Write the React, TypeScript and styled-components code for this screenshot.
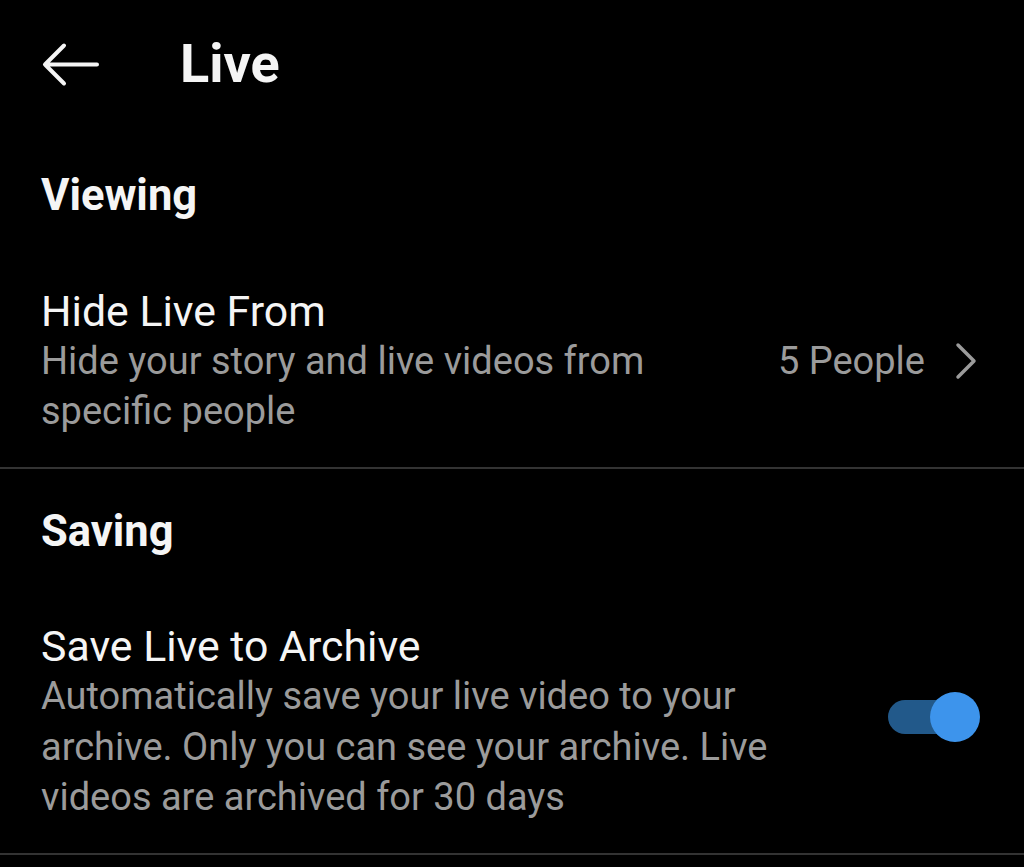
import styled, { createGlobalStyle } from "styled-components";

const GlobalStyle = createGlobalStyle`
    html, body {
        margin: 0;
        padding: 0;
        background: #000;
    }
    body {
        font-family: Roboto, "Noto Sans", sans-serif;
        -webkit-font-smoothing: antialiased;
    }
`

const StyledPage = styled.div`
    background: #000;
    color: #f5f5f5;
    min-height: 867px;
    width: 1024px;
`

const StyledHeader = styled.header`
    align-items: center;
    display: flex;
    height: 128px;
    padding: 0 0 5px 41px;
`

const StyledBackBtn = styled.button`
    background: none;
    border: none;
    display: flex;
    margin: 0 81px 0 0;
    padding: 0;
`

const StyledHeaderTitle = styled.h1`
    font-size: 54px;
    font-weight: 700;
    line-height: 60px;
    margin: 0;
`

const StyledSectionTitle = styled.h2`
    font-size: 43.5px;
    font-weight: 700;
    line-height: 50px;
    margin: 0;
    padding: 38px 41px 0;
`

const StyledRow = styled.div`
    align-items: center;
    display: flex;
    padding: 64.5px 44px 30px 41px;
`

const StyledText = styled.div<{ maxWidth: number }>`
    flex: 1;
    max-width: ${({ maxWidth }) => maxWidth}px;
`

const StyledRowTitle = styled.p`
    font-size: 42.8px;
    line-height: 50px;
    margin: 0;
`

const StyledDescription = styled.p`
    color: #9b9b9b;
    font-size: 38px;
    line-height: 50.5px;
    margin: 0;
`

const StyledTrailing = styled.div`
    align-items: center;
    color: #9b9b9b;
    display: flex;
    font-size: 38px;
    gap: 30px;
    margin-left: auto;
    padding-right: 3px;
`

const StyledDivider = styled.hr`
    border: none;
    border-top: 2px solid #333;
    margin: 0;
`

const StyledSwitch = styled.div<{ on: boolean }>`
    flex-shrink: 0;
    height: 50px;
    margin-left: auto;
    margin-top: -10px;
    position: relative;
    width: 92px;

    &::before {
        background: ${({ on }) => on ? '#22598a' : '#555'};
        border-radius: 17px;
        content: '';
        height: 34px;
        left: 0;
        position: absolute;
        top: 8px;
        width: 76px;
    }
`

const StyledKnob = styled.span<{ on: boolean }>`
    background: ${({ on }) => on ? '#3d94ec' : '#ddd'};
    border-radius: 50%;
    height: 50px;
    position: absolute;
    top: 0;
    width: 50px;
    ${({ on }) => on ? `right: 0;` : `left: 0;`}
`

const BackArrow = () => (
    <svg width="58" height="45" viewBox="0 0 58 45" fill="none" stroke="#f5f5f5" strokeWidth="4" strokeLinecap="round" strokeLinejoin="round">
        <path d="M56 22.5H4M23 3.5L4 22.5L23 41.5" />
    </svg>
)

const Chevron = () => (
    <svg width="22" height="38" viewBox="0 0 22 38" fill="none" stroke="#9b9b9b" strokeWidth="3.5" strokeLinecap="round" strokeLinejoin="round">
        <path d="M3 3L19 19L3 35" />
    </svg>
)

const App = () => {
    return (
        <StyledPage>
            <GlobalStyle />
            <StyledHeader>
                <StyledBackBtn aria-label="Back"><BackArrow /></StyledBackBtn>
                <StyledHeaderTitle>Live</StyledHeaderTitle>
            </StyledHeader>

            <StyledSectionTitle>Viewing</StyledSectionTitle>
            <StyledRow>
                <StyledText maxWidth={680}>
                    <StyledRowTitle>Hide Live From</StyledRowTitle>
                    <StyledDescription>Hide your story and live videos from specific people</StyledDescription>
                </StyledText>
                <StyledTrailing>
                    <span>5 People</span>
                    <Chevron />
                </StyledTrailing>
            </StyledRow>
            <StyledDivider />

            <StyledSectionTitle>Saving</StyledSectionTitle>
            <StyledRow>
                <StyledText maxWidth={790}>
                    <StyledRowTitle>Save Live to Archive</StyledRowTitle>
                    <StyledDescription>Automatically save your live video to your archive. Only you can see your archive. Live videos are archived for 30 days</StyledDescription>
                </StyledText>
                <StyledSwitch on={true}>
                    <StyledKnob on={true} />
                </StyledSwitch>
            </StyledRow>
            <StyledDivider />
        </StyledPage>
    )
}

export default App;
